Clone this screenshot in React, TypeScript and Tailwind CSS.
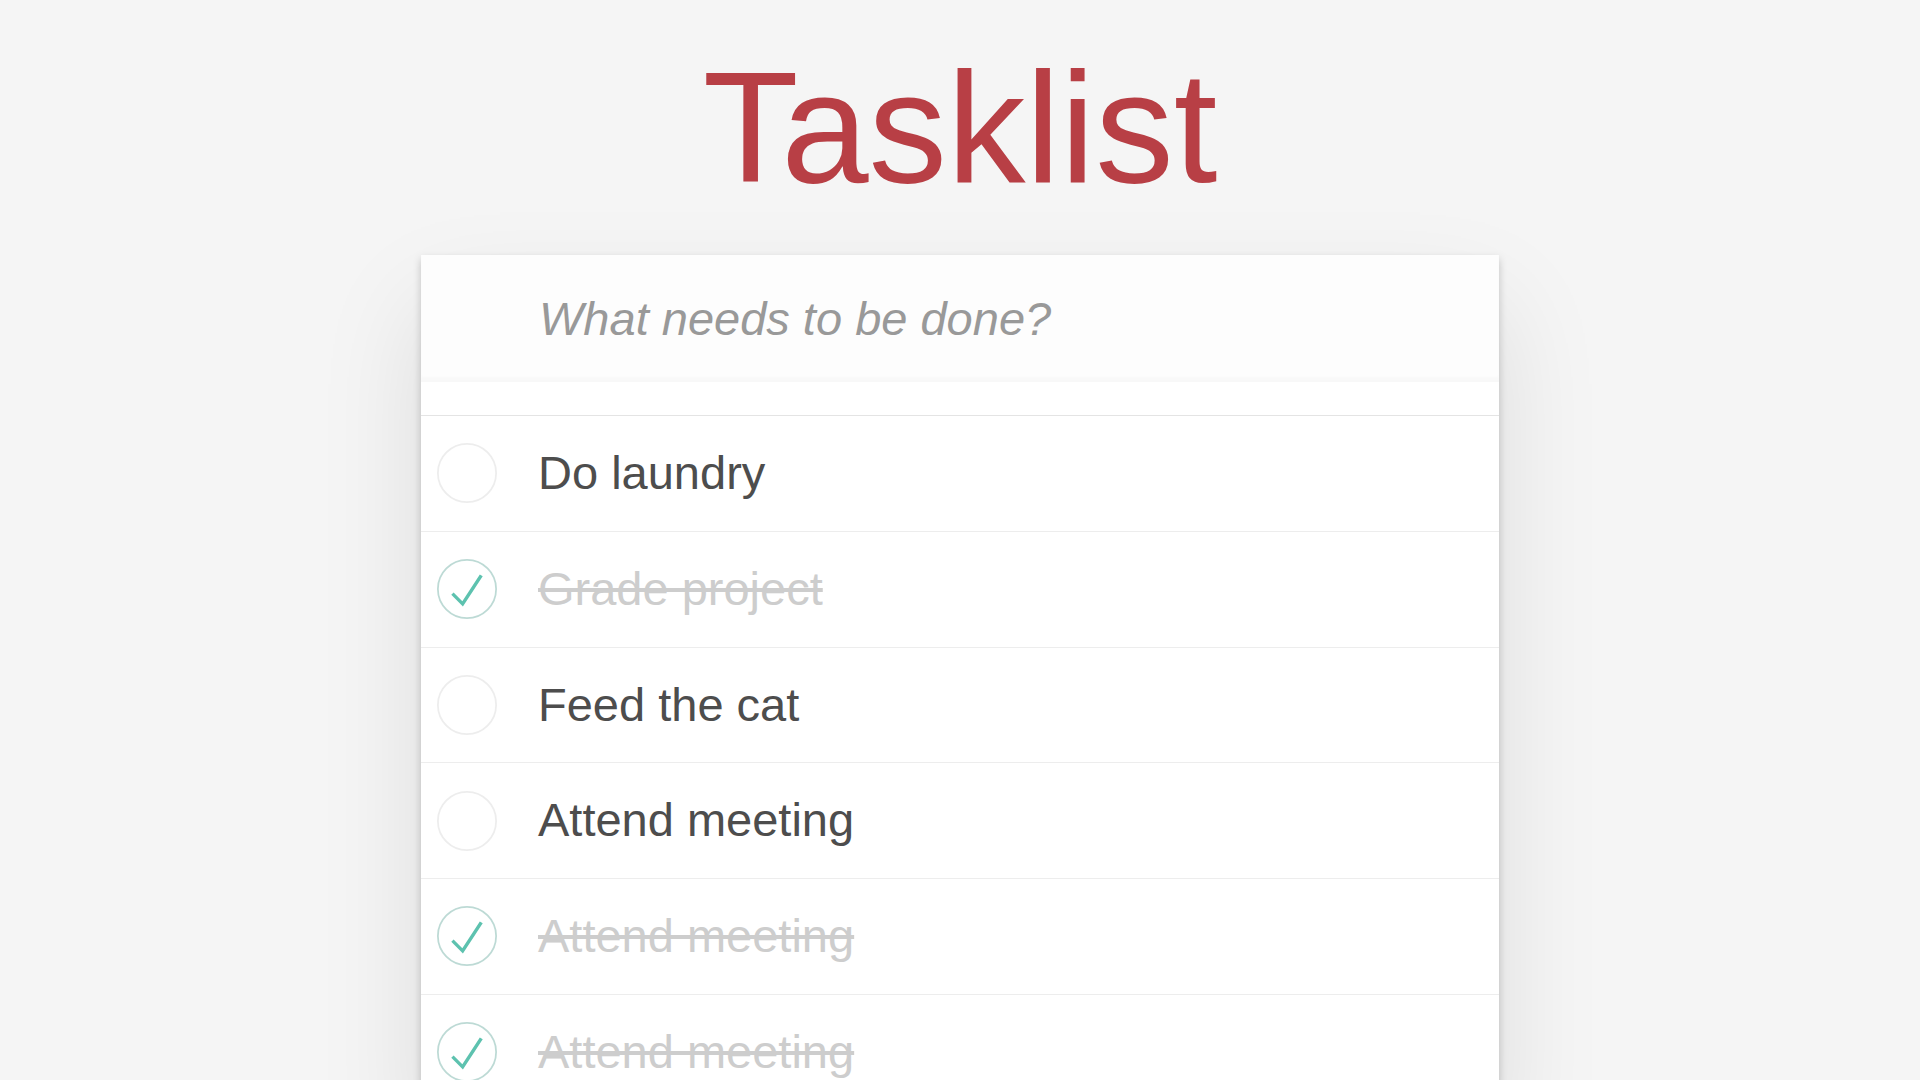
const tasks = [
  { title: "Do laundry", done: false },
  { title: "Grade project", done: true },
  { title: "Feed the cat", done: false },
  { title: "Attend meeting", done: false },
  { title: "Attend meeting", done: true },
  { title: "Attend meeting", done: true },
];

function Toggle({ done }: { done: boolean }) {
  return (
    <svg width="60" height="60" viewBox="-51.5 -51.5 103 103" className="shrink-0">
      <circle cx="0" cy="0" r="50" fill="none" stroke={done ? "#bddad5" : "#ededed"} strokeWidth="3" />
      {done && <path fill="#5dc2af" d="M22 -25L-8 21L-23 6L-27 10L-7 30L27 -22z" />}
    </svg>
  );
}

export default function App() {
  return (
    <main className="min-h-screen bg-[#f5f5f5] font-['Liberation_Sans',Arial,sans-serif]">
      <div className="flex flex-col items-center pt-[49px]">
        <h1 className="text-[157px] leading-[157px] text-[#b83f45]">Tasklist</h1>

        <section className="mt-[49px] w-[1078px] bg-white shadow-[0_4px_8px_0_rgba(0,0,0,0.2),0_50px_100px_0_rgba(0,0,0,0.1)]">
          <div className="flex h-[127px] items-center bg-[#fdfdfd] pl-[118px] pt-[1px] shadow-[inset_0_-5px_3px_rgba(0,0,0,0.02)]">
            <input
              className="w-full bg-transparent text-[47px] text-[#4d4d4d] outline-none placeholder:italic placeholder:text-[#999]"
              placeholder="What needs to be done?"
            />
          </div>
          <div className="h-[33px]" />

          <ul className="border-t border-[#e4e4e4]">
            {tasks.map((task, i) => (
              <li key={i} className="flex h-[115.75px] items-center border-b border-[#ededed] pl-[16px]">
                <Toggle done={task.done} />
                <span
                  className={
                    task.done
                      ? "ml-[41px] text-[47px] text-[#cdcdcd] line-through"
                      : "ml-[41px] text-[47px] text-[#4d4d4d]"
                  }
                >
                  {task.title}
                </span>
              </li>
            ))}
          </ul>
        </section>
      </div>
    </main>
  );
}
